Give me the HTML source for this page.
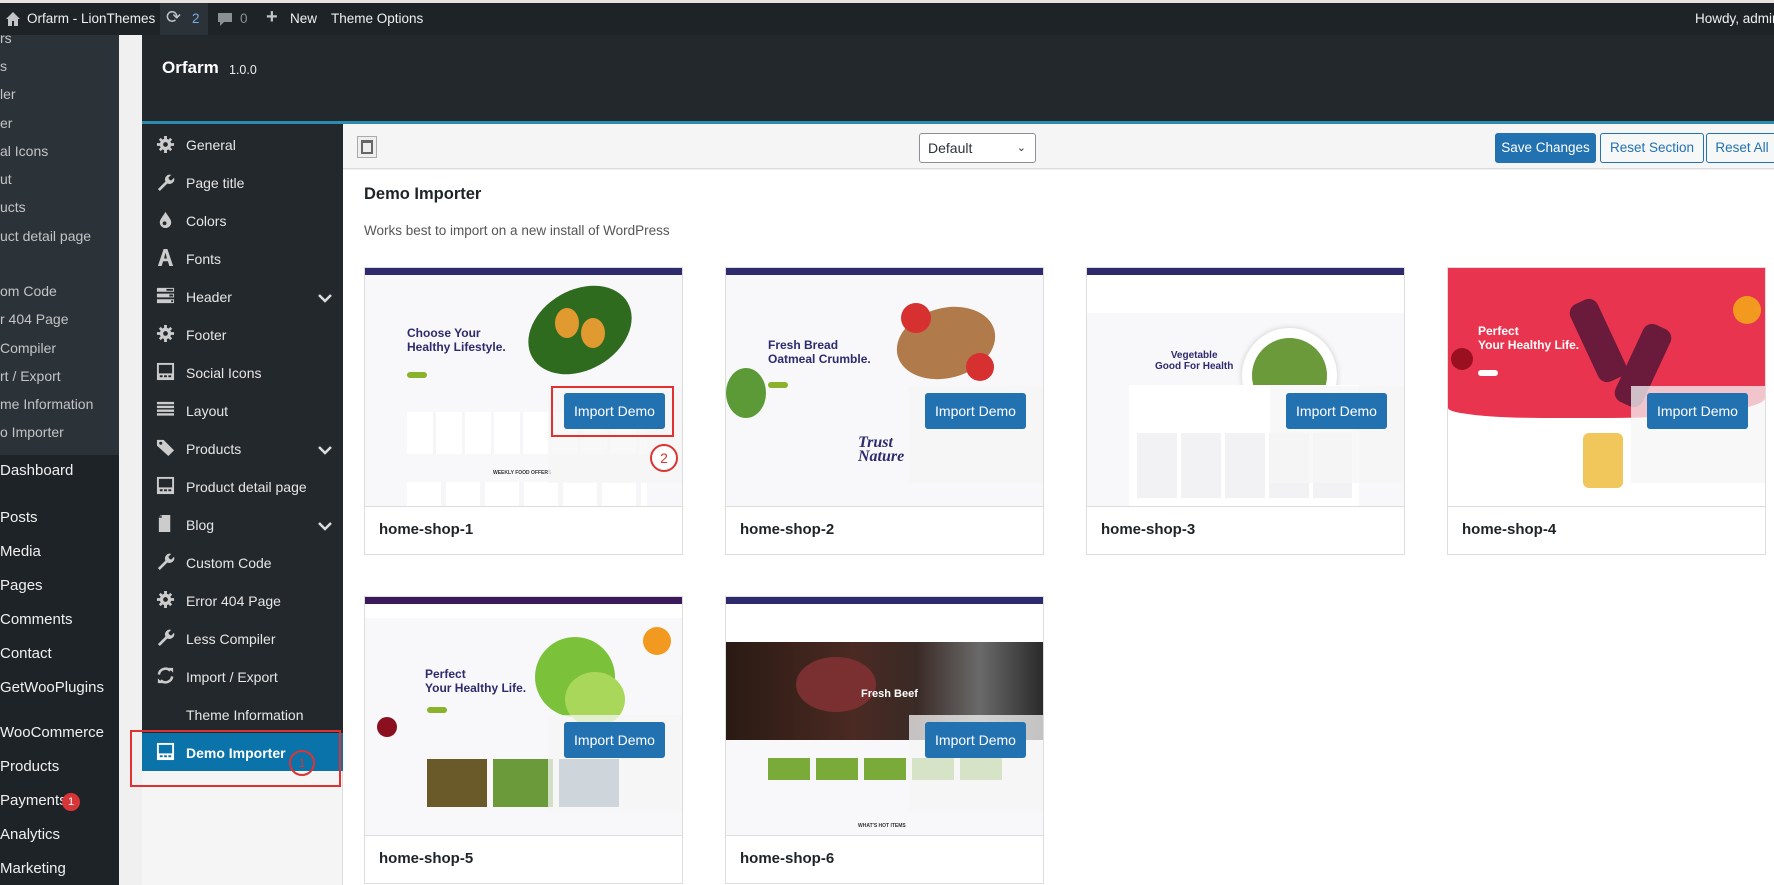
<!DOCTYPE html>
<html><head><meta charset="utf-8">
<style>
*{box-sizing:border-box;margin:0;padding:0}
body{width:1774px;height:885px;overflow:hidden;background:#f0f0f1;font-family:"Liberation Sans","DejaVu Sans",sans-serif;position:relative}
.a{position:absolute;white-space:nowrap}
#bar{left:0;top:0;width:1774px;height:35px;background:#1d2327;border-top:3px solid #e8e3e1}
.bt{color:#f0f0f1;font-size:13.5px;top:11px}
#side{left:0;top:35px;width:119px;height:850px;background:#1d2327}
#sub{left:0;top:35px;width:119px;height:420px;background:#2c3338}
.sm{color:#c3c4c7;font-size:14px;left:0}
.mm{color:#f0f0f1;font-size:15px;left:0}
#ph{left:142px;top:35px;width:1632px;height:86px;background:#23282d}
#pl{left:142px;top:121px;width:1632px;height:3px;background:#2a8db0}
#os{left:142px;top:124px;width:201px;height:647px;background:#23282d}
#osb{left:142px;top:771px;width:201px;height:114px;background:#f5f5f5;border-right:1px solid #ddd}
.oi{left:186px;color:#e6e6e6;font-size:14px}
.ic{left:156px;width:19px;height:19px}
.chev{left:318px;width:14px;height:10px}
#tb{left:343px;top:124px;width:1431px;height:45px;background:#f5f5f5;border-bottom:1px solid #ddd}
#ct{left:343px;top:170px;width:1431px;height:715px;background:#fff}
.btn{height:30px;border:1px solid #2271b1;border-radius:3px;font-size:13.5px;line-height:28px;text-align:center;color:#2271b1;background:#f6f7f7}
.card{width:319px;height:288px;border:1px solid #ddd;background:#fff;overflow:hidden}
.img{position:absolute;left:0;top:0;width:317px;height:239px;overflow:hidden;border-bottom:1px solid #ddd;background:#f8f8fa}
.lbl{position:absolute;left:14px;top:253px;font-size:15px;font-weight:bold;color:#1d2327}
.ov{position:absolute;left:183px;top:118px;width:136px;height:97px;background:rgba(245,245,245,.75)}
.ib{position:absolute;left:199px;top:125px;width:101px;height:36px;background:#2271b1;color:#fff;border-radius:3px;font-size:14px;line-height:36px;text-align:center}
.top{position:absolute;left:0;top:0;width:317px;height:7px;background:#2d2a6e}
.h{position:absolute;font-weight:bold;color:#2d2a6e;font-size:12px;line-height:14px;white-space:nowrap}
.blob{position:absolute;border-radius:50%}
</style></head><body>

<div id="bar" class="a"></div>
<svg class="a" style="left:5px;top:11px" width="16" height="16" viewBox="0 0 16 16"><path d="M8 1 L1 8 H3 V15 H7 V10 H9 V15 H13 V8 H15 Z" fill="#c3c4c7"/></svg>
<div class="a bt" style="left:27px">Orfarm - LionThemes</div>
<div class="a" style="left:160px;top:3px;width:48px;height:32px;background:#2c3338"></div>
<div class="a bt" style="left:166px;top:7px;font-size:18px;color:#c3c4c7">⟳</div>
<div class="a bt" style="left:192px;color:#72aee6">2</div>
<svg class="a" style="left:217px;top:12px" width="16" height="15" viewBox="0 0 16 15"><path d="M1 1H15V10H7L3 14V10H1Z" fill="#8c8f94"/></svg>
<div class="a bt" style="left:240px;color:#8c8f94">0</div>
<div class="a bt" style="left:266px;top:6px;font-size:20px;font-weight:bold;color:#c3c4c7">+</div>
<div class="a bt" style="left:290px">New</div>
<div class="a bt" style="left:331px">Theme Options</div>
<div class="a bt" style="left:1695px">Howdy, admin</div>

<div id="side" class="a"></div>
<div id="sub" class="a"></div>
<div class="a sm" style="top:30px">rs</div>
<div class="a sm" style="top:58px">s</div>
<div class="a sm" style="top:86px">ler</div>
<div class="a sm" style="top:115px">er</div>
<div class="a sm" style="top:143px">al Icons</div>
<div class="a sm" style="top:171px">ut</div>
<div class="a sm" style="top:199px">ucts</div>
<div class="a sm" style="top:228px">uct detail page</div>
<div class="a sm" style="top:283px">om Code</div>
<div class="a sm" style="top:311px">r 404 Page</div>
<div class="a sm" style="top:340px"> Compiler</div>
<div class="a sm" style="top:368px">rt / Export</div>
<div class="a sm" style="top:396px">me Information</div>
<div class="a sm" style="top:424px">o Importer</div>
<div class="a mm" style="top:462px">Dashboard</div>
<div class="a mm" style="top:509px">Posts</div>
<div class="a mm" style="top:543px">Media</div>
<div class="a mm" style="top:577px">Pages</div>
<div class="a mm" style="top:611px">Comments</div>
<div class="a mm" style="top:645px">Contact</div>
<div class="a mm" style="top:679px">GetWooPlugins</div>
<div class="a mm" style="top:724px">WooCommerce</div>
<div class="a mm" style="top:758px">Products</div>
<div class="a mm" style="top:792px">Payments</div>
<div class="a" style="left:62px;top:793px;width:18px;height:18px;border-radius:9px;background:#d63638;color:#fff;font-size:11px;line-height:18px;text-align:center">1</div>
<div class="a mm" style="top:826px">Analytics</div>
<div class="a mm" style="top:860px">Marketing</div>

<div id="ph" class="a"></div>
<div class="a" style="left:162px;top:58px;color:#fff;font-size:17px;font-weight:bold">Orfarm</div>
<div class="a" style="left:229px;top:63px;color:#eee;font-size:12.5px">1.0.0</div>
<div id="pl" class="a"></div>

<div id="os" class="a"></div>
<div id="osb" class="a"></div>
<svg class="a ic" style="top:135px" viewBox="0 0 20 20"><circle cx="10" cy="10" r="6" fill="#ccc"/><circle cx="10" cy="10" r="2.5" fill="#23282d"/><path d="M8.5 1h3v4h-3zM8.5 15h3v4h-3zM1 8.5h4v3H1zM15 8.5h4v3h-4z" fill="#ccc"/><path d="M3 5l2-2 3 3-2 2zM15 3l2 2-3 3-2-2zM3 15l3-3 2 2-3 3zM14 12l3 3-2 2-3-3z" fill="#ccc"/></svg>
<div class="a oi" style="top:137px">General</div>
<svg class="a ic" style="top:173px" viewBox="0 0 20 20"><path d="M2 17l8-8a5 5 0 0 1 6-7l-3 3 1 2 2 1 3-3a5 5 0 0 1-7 6l-8 8z" fill="#ccc"/></svg>
<div class="a oi" style="top:175px">Page title</div>
<svg class="a ic" style="top:210px" viewBox="0 0 20 20"><path d="M10 2C7 7 4 10 4 13a6 6 0 0 0 12 0c0-3-3-6-6-11z" fill="#ccc"/><circle cx="9" cy="14" r="2" fill="#23282d"/></svg>
<div class="a oi" style="top:213px">Colors</div>
<svg class="a ic" style="top:248px" viewBox="0 0 20 20"><path d="M8 1h4l6 18h-4l-1.5-5h-5L6 19H2zM8.5 11h3L10 5z" fill="#ccc"/></svg>
<div class="a oi" style="top:251px">Fonts</div>
<svg class="a ic" style="top:286px" viewBox="0 0 20 20"><path d="M1 2h18v4H1zM1 8h18v4H1zM1 14h18v4H1z" fill="#ccc"/><path d="M11 3h7v2h-7zM14 9h4v2h-4zM16 15h2v2h-2z" fill="#23282d"/></svg>
<div class="a oi" style="top:289px">Header</div>
<svg class="a chev" style="top:293px" viewBox="0 0 14 10"><path d="M1 2l6 6 6-6" stroke="#ddd" stroke-width="2.5" fill="none"/></svg>
<svg class="a ic" style="top:324px" viewBox="0 0 20 20"><circle cx="10" cy="10" r="6" fill="#ccc"/><circle cx="10" cy="10" r="2.5" fill="#23282d"/><path d="M8.5 1h3v4h-3zM8.5 15h3v4h-3zM1 8.5h4v3H1zM15 8.5h4v3h-4z" fill="#ccc"/><path d="M3 5l2-2 3 3-2 2zM15 3l2 2-3 3-2-2zM3 15l3-3 2 2-3 3zM14 12l3 3-2 2-3-3z" fill="#ccc"/></svg>
<div class="a oi" style="top:327px">Footer</div>
<svg class="a ic" style="top:362px" viewBox="0 0 20 20"><rect x="1" y="1" width="18" height="18" fill="#ccc"/><rect x="3" y="3" width="14" height="9" fill="#23282d"/><rect x="4" y="14" width="3" height="2" fill="#23282d"/><rect x="8.5" y="14" width="3" height="2" fill="#23282d"/><rect x="13" y="14" width="3" height="2" fill="#23282d"/></svg>
<div class="a oi" style="top:365px">Social Icons</div>
<svg class="a ic" style="top:400px" viewBox="0 0 20 20"><path d="M1 2h18v2.5H1zM1 6h18v2.5H1zM1 10h18v2.5H1zM1 14h18v2.5H1z" fill="#ccc"/></svg>
<div class="a oi" style="top:403px">Layout</div>
<svg class="a ic" style="top:438px" viewBox="0 0 20 20"><path d="M1 8V2h7l11 11-6 6z" fill="#ccc"/><circle cx="5" cy="5.5" r="1.6" fill="#23282d"/></svg>
<div class="a oi" style="top:441px">Products</div>
<svg class="a chev" style="top:445px" viewBox="0 0 14 10"><path d="M1 2l6 6 6-6" stroke="#ddd" stroke-width="2.5" fill="none"/></svg>
<svg class="a ic" style="top:476px" viewBox="0 0 20 20"><rect x="1" y="1" width="18" height="18" fill="#ccc"/><rect x="3" y="3" width="14" height="9" fill="#23282d"/><rect x="4" y="14" width="3" height="2" fill="#23282d"/><rect x="8.5" y="14" width="3" height="2" fill="#23282d"/><rect x="13" y="14" width="3" height="2" fill="#23282d"/></svg>
<div class="a oi" style="top:479px">Product detail page</div>
<svg class="a ic" style="top:514px" viewBox="0 0 20 20"><path d="M5 1h10v18H3V4z" fill="#ccc"/><path d="M3 4l3-3v3z" fill="#23282d"/></svg>
<div class="a oi" style="top:517px">Blog</div>
<svg class="a chev" style="top:521px" viewBox="0 0 14 10"><path d="M1 2l6 6 6-6" stroke="#ddd" stroke-width="2.5" fill="none"/></svg>
<svg class="a ic" style="top:552px" viewBox="0 0 20 20"><path d="M2 17l8-8a5 5 0 0 1 6-7l-3 3 1 2 2 1 3-3a5 5 0 0 1-7 6l-8 8z" fill="#ccc"/></svg>
<div class="a oi" style="top:555px">Custom Code</div>
<svg class="a ic" style="top:590px" viewBox="0 0 20 20"><circle cx="10" cy="10" r="6" fill="#ccc"/><circle cx="10" cy="10" r="2.5" fill="#23282d"/><path d="M8.5 1h3v4h-3zM8.5 15h3v4h-3zM1 8.5h4v3H1zM15 8.5h4v3h-4z" fill="#ccc"/><path d="M3 5l2-2 3 3-2 2zM15 3l2 2-3 3-2-2zM3 15l3-3 2 2-3 3zM14 12l3 3-2 2-3-3z" fill="#ccc"/></svg>
<div class="a oi" style="top:593px">Error 404 Page</div>
<svg class="a ic" style="top:628px" viewBox="0 0 20 20"><path d="M2 17l8-8a5 5 0 0 1 6-7l-3 3 1 2 2 1 3-3a5 5 0 0 1-7 6l-8 8z" fill="#ccc"/></svg>
<div class="a oi" style="top:631px">Less Compiler</div>
<svg class="a ic" style="top:666px" viewBox="0 0 20 20"><path d="M3 9a7 7 0 0 1 12-4M17 11a7 7 0 0 1-12 4" stroke="#ccc" stroke-width="2.6" fill="none"/><path d="M13 2h5v5zM7 18H2v-5z" fill="#ccc"/></svg>
<div class="a oi" style="top:669px">Import / Export</div>
<div class="a oi" style="top:707px">Theme Information</div>
<div class="a" style="left:142px;top:733px;width:201px;height:38px;background:#0a73aa"></div>
<svg class="a ic" style="top:742px" viewBox="0 0 20 20"><rect x="1" y="1" width="18" height="18" fill="#fff"/><rect x="3" y="3" width="14" height="9" fill="#0a73aa"/><rect x="4" y="14" width="3" height="2" fill="#0a73aa"/><rect x="8.5" y="14" width="3" height="2" fill="#0a73aa"/><rect x="13" y="14" width="3" height="2" fill="#0a73aa"/></svg>
<div class="a oi" style="top:745px;color:#fff;font-weight:bold">Demo Importer</div>
<div class="a" style="left:289px;top:750px;width:26px;height:26px;border:2px solid #d33;border-radius:50%;color:#d33;font-size:12px;text-align:center;line-height:22px">1</div>
<div class="a" style="left:130px;top:730px;width:211px;height:57px;border:2px solid #e03030"></div>

<div id="tb" class="a"></div>
<div class="a" style="left:357px;top:136px;width:20px;height:22px;border:1px solid #aaa;background:#eee"><div style="margin:3px;width:12px;height:14px;border:2px solid #666;border-top-width:3px"></div></div>
<div class="a" style="left:919px;top:133px;width:117px;height:30px;border:1px solid #8c8f94;border-radius:3px;background:#fff;font-size:14px;line-height:28px;padding-left:8px;color:#2c3338">Default<span style="position:absolute;right:9px;top:0;font-size:11px">&#8964;</span></div>
<div class="a btn" style="left:1495px;top:133px;width:101px;background:#2271b1;color:#fff">Save Changes</div>
<div class="a btn" style="left:1600px;top:133px;width:104px">Reset Section</div>
<div class="a btn" style="left:1706px;top:133px;width:72px">Reset All</div>

<div id="ct" class="a"></div>
<div class="a" style="left:364px;top:185px;font-size:16.5px;font-weight:bold;color:#1d2327">Demo Importer</div>
<div class="a" style="left:364px;top:223px;font-size:13.5px;color:#555">Works best to import on a new install of WordPress</div>

<div class="a card" style="left:364px;top:267px"><div class="img">
<div class="top"></div>
<div class="h" style="left:42px;top:58px">Choose Your<br>Healthy Lifestyle.</div>
<div class="blob" style="left:42px;top:104px;width:20px;height:6px;border-radius:3px;background:#8ab22a"></div>
<div class="blob" style="left:160px;top:22px;width:110px;height:80px;background:#2f6b1f;transform:rotate(-30deg)"></div>
<div class="blob" style="left:190px;top:40px;width:24px;height:30px;background:#e09a2f"></div>
<div class="blob" style="left:216px;top:50px;width:24px;height:30px;background:#e09a2f"></div>
<div style="position:absolute;left:42px;top:144px;width:240px;height:42px;background:repeating-linear-gradient(90deg,#fff 0 26px,#f6f6f8 26px 29px)"></div>
<div class="h" style="left:128px;top:198px;font-size:5px;color:#333">WEEKLY FOOD OFFERS</div>
<div style="position:absolute;left:42px;top:214px;width:240px;height:30px;background:repeating-linear-gradient(90deg,#fff 0 34px,#f6f6f8 34px 39px)"></div>
<div class="ov"></div><div class="ib">Import Demo</div>
</div><div class="lbl">home-shop-1</div></div>
<div class="a" style="left:551px;top:386px;width:123px;height:51px;border:2px solid #e03030"></div>
<div class="a" style="left:650px;top:444px;width:28px;height:28px;border:2px solid #d33;border-radius:50%;color:#d33;font-size:14px;text-align:center;line-height:24px;background:#fff">2</div>

<div class="a card" style="left:725px;top:267px"><div class="img">
<div class="top"></div>
<div class="h" style="left:42px;top:70px">Fresh Bread<br>Oatmeal Crumble.</div>
<div class="blob" style="left:42px;top:114px;width:20px;height:6px;border-radius:3px;background:#8ab22a"></div>
<div class="blob" style="left:170px;top:40px;width:100px;height:70px;background:#b07a4a;transform:rotate(-15deg)"></div>
<div class="blob" style="left:175px;top:35px;width:30px;height:30px;background:#d73030"></div>
<div class="blob" style="left:240px;top:85px;width:28px;height:28px;background:#d73030"></div>
<div class="blob" style="left:0px;top:100px;width:40px;height:50px;background:#5b9a36"></div>
<div class="h" style="left:132px;top:168px;font-size:16px;font-style:italic;font-family:'Liberation Serif',serif">Trust<br>Nature</div>
<div class="ov"></div><div class="ib">Import Demo</div>
</div><div class="lbl">home-shop-2</div></div>

<div class="a card" style="left:1086px;top:267px"><div class="img">
<div class="top"></div>
<div style="position:absolute;left:0;top:7px;width:317px;height:38px;background:#fff"></div>
<div class="h" style="left:68px;top:82px;font-size:10px;line-height:11px;text-align:center">Vegetable<br>Good For Health</div>
<div class="blob" style="left:155px;top:60px;width:95px;height:95px;background:#fff;box-shadow:0 0 6px #ccc"></div>
<div class="blob" style="left:165px;top:70px;width:75px;height:75px;background:#6a9a3a"></div>
<div style="position:absolute;left:42px;top:117px;width:230px;height:122px;background:#fff"></div>
<div style="position:absolute;left:50px;top:165px;width:215px;height:65px;background:repeating-linear-gradient(90deg,#f2f2f4 0 40px,#fff 40px 44px)"></div>
<div class="ov"></div><div class="ib">Import Demo</div>
</div><div class="lbl">home-shop-3</div></div>

<div class="a card" style="left:1447px;top:267px"><div class="img" style="background:#fff">
<div style="position:absolute;left:0;top:0;width:317px;height:150px;background:#e8344f;border-radius:0 0 50% 30%/0 0 20px 10px"></div>
<div class="h" style="left:30px;top:56px;color:#fff">Perfect<br>Your Healthy Life.</div>
<div class="blob" style="left:30px;top:102px;width:20px;height:6px;border-radius:3px;background:#fff"></div>
<div class="blob" style="left:135px;top:30px;width:30px;height:85px;border-radius:10px;background:#6a1a3a;transform:rotate(-25deg)"></div>
<div class="blob" style="left:180px;top:55px;width:30px;height:85px;border-radius:10px;background:#6a1a3a;transform:rotate(25deg)"></div>
<div class="blob" style="left:285px;top:28px;width:28px;height:28px;background:#f29a1f"></div>
<div class="blob" style="left:3px;top:80px;width:22px;height:22px;background:#9b1020"></div>
<div class="blob" style="left:135px;top:165px;width:40px;height:55px;border-radius:6px;background:#f1c65a"></div>
<div class="ov"></div><div class="ib">Import Demo</div>
</div><div class="lbl">home-shop-4</div></div>

<div class="a card" style="left:364px;top:596px"><div class="img">
<div class="top" style="background:#3a1a5a"></div>
<div style="position:absolute;left:0;top:7px;width:317px;height:14px;background:#fff"></div>
<div class="h" style="left:60px;top:70px">Perfect<br>Your Healthy Life.</div>
<div class="blob" style="left:62px;top:110px;width:20px;height:6px;border-radius:3px;background:#8ab22a"></div>
<div class="blob" style="left:170px;top:40px;width:80px;height:80px;background:#7bc23a"></div>
<div class="blob" style="left:200px;top:75px;width:60px;height:55px;background:#a8d75a"></div>
<div class="blob" style="left:278px;top:30px;width:28px;height:28px;background:#f29a1f"></div>
<div class="blob" style="left:12px;top:120px;width:20px;height:20px;background:#8a1020"></div>
<div style="position:absolute;left:62px;top:162px;width:60px;height:48px;background:#6a5a2a"></div>
<div style="position:absolute;left:128px;top:162px;width:60px;height:48px;background:#6a9a3a"></div>
<div style="position:absolute;left:194px;top:162px;width:60px;height:48px;background:#5a7a8a"></div>
<div class="ov"></div><div class="ib">Import Demo</div>
</div><div class="lbl">home-shop-5</div></div>

<div class="a card" style="left:725px;top:596px"><div class="img">
<div class="top"></div>
<div style="position:absolute;left:0;top:7px;width:317px;height:38px;background:#fff"></div>
<div style="position:absolute;left:0;top:45px;width:317px;height:98px;background:linear-gradient(90deg,#2a1a14,#4a2a22 40%,#3a2a26 60%,#6a6a6a 80%,#2a2a2a)"></div>
<div class="blob" style="left:70px;top:60px;width:80px;height:55px;background:#7a3030"></div>
<div class="h" style="left:135px;top:90px;color:#fff;font-size:11px">Fresh Beef</div>
<div style="position:absolute;left:42px;top:161px;width:235px;height:22px;background:repeating-linear-gradient(90deg,#7aaa3a 0 42px,#f6f6f8 42px 48px)"></div>
<div class="h" style="left:132px;top:222px;font-size:5px;color:#333">WHAT'S HOT ITEMS</div>
<div class="ov"></div><div class="ib">Import Demo</div>
</div><div class="lbl">home-shop-6</div></div>

</body></html>
